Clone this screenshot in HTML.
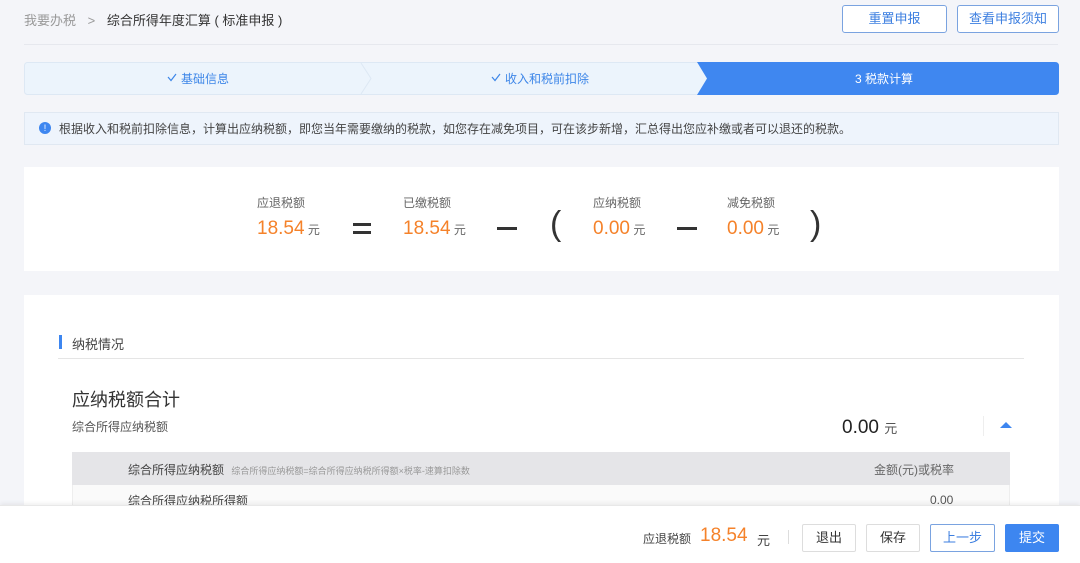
<!DOCTYPE html>
<html><head><meta charset="utf-8"><style>
*{margin:0;padding:0;box-sizing:border-box}
body{width:1080px;height:563px;overflow:hidden;background:#f4f5f9;font-family:"Liberation Sans","Noto Sans CJK SC",sans-serif;position:relative;color:#333}
.a{position:absolute;white-space:nowrap}
.btn{position:absolute;border:1px solid #7aa3e0;border-radius:3px;background:#fff;color:#3d7fe0;font-size:13px;text-align:center;line-height:26px}
.org{color:#f5822a}
.k{font-size:12px;color:#666}
.fb{position:absolute;border:1px solid #ddd;border-radius:2px;background:#fff;font-size:13px;text-align:center;line-height:26px;color:#333}
</style></head><body>
<div class="a" style="left:24px;top:10px;font-size:13px;color:#999">我要办税 <span style="margin:0 8px">&gt;</span> <span style="color:#333">综合所得年度汇算 ( 标准申报 )</span></div>
<div class="btn" style="left:842px;top:5px;width:105px;height:28px">重置申报</div>
<div class="btn" style="left:957px;top:5px;width:102px;height:28px">查看申报须知</div>
<div class="a" style="left:24px;top:44px;width:1034px;height:1px;background:#e6e8ee"></div>
<svg class="a" style="left:24px;top:62px" width="1035" height="33">
<rect x="0.5" y="0.5" width="1034" height="32" rx="3" fill="#ecf4fc" stroke="#dde8f4"/>
<path d="M337 1 L347 16.5 L337 32" fill="none" stroke="#dde8f4"/>
<path d="M673 0 L1031 0 Q1035 0 1035 4 L1035 29 Q1035 33 1031 33 L673 33 L683 16.5 Z" fill="#3f87f0"/>
<path d="M144 15 L147 18.5 L152 12" fill="none" stroke="#3d86e8" stroke-width="1.2"/>
<text x="157" y="21" font-size="12" fill="#3d86e8" font-family="Liberation Sans,Noto Sans CJK SC,sans-serif">基础信息</text>
<path d="M468 15 L471 18.5 L476 12" fill="none" stroke="#3d86e8" stroke-width="1.2"/>
<text x="481" y="21" font-size="12" fill="#3d86e8" font-family="Liberation Sans,Noto Sans CJK SC,sans-serif">收入和税前扣除</text>
<text x="860" y="21" font-size="12" fill="#fff" text-anchor="middle" font-family="Liberation Sans,Noto Sans CJK SC,sans-serif">3 税款计算</text>
</svg>
<div class="a" style="left:24px;top:112px;width:1035px;height:33px;background:#eef4fc;border:1px solid #e0e8f2"></div>
<div class="a" style="left:39px;top:122px;width:12px;height:12px;border-radius:50%;background:#3d86f0;color:#fff;font-size:9px;text-align:center;line-height:12px">!</div>
<div class="a" style="left:59px;top:120px;font-size:12px;color:#444">根据收入和税前扣除信息，计算出应纳税额，即您当年需要缴纳的税款，如您存在减免项目，可在该步新增，汇总得出您应补缴或者可以退还的税款。</div>
<div class="a" style="left:24px;top:167px;width:1035px;height:104px;background:#fff"></div>
<div class="a k" style="left:257px;top:194px">应退税额</div>
<div class="a org" style="left:257px;top:218px;font-size:19px">18.54<span style="font-size:12px;color:#666"> 元</span></div>
<div class="a" style="left:353px;top:223px;width:18px;height:3px;background:#333"></div>
<div class="a" style="left:353px;top:231px;width:18px;height:3px;background:#333"></div>
<div class="a k" style="left:403px;top:194px">已缴税额</div>
<div class="a org" style="left:403px;top:218px;font-size:19px">18.54<span style="font-size:12px;color:#666"> 元</span></div>
<div class="a" style="left:497px;top:227px;width:20px;height:3px;background:#333"></div>
<div class="a" style="left:550px;top:205px;font-size:34px;color:#333">(</div>
<div class="a k" style="left:593px;top:194px">应纳税额</div>
<div class="a org" style="left:593px;top:218px;font-size:19px">0.00<span style="font-size:12px;color:#666"> 元</span></div>
<div class="a" style="left:677px;top:227px;width:20px;height:3px;background:#333"></div>
<div class="a k" style="left:727px;top:194px">减免税额</div>
<div class="a org" style="left:727px;top:218px;font-size:19px">0.00<span style="font-size:12px;color:#666"> 元</span></div>
<div class="a" style="left:810px;top:205px;font-size:34px;color:#333">)</div>
<div class="a" style="left:24px;top:295px;width:1035px;height:220px;background:#fff"></div>
<div class="a" style="left:59px;top:335px;width:3px;height:14px;background:#3d86f0"></div>
<div class="a" style="left:72px;top:334px;font-size:13px;color:#444">纳税情况</div>
<div class="a" style="left:58px;top:358px;width:966px;height:1px;background:#e5e5e5"></div>
<div class="a" style="left:72px;top:386px;font-size:18px;color:#333">应纳税额合计</div>
<div class="a" style="left:72px;top:418px;font-size:12px;color:#555">综合所得应纳税额</div>
<div class="a" style="left:842px;top:417px;font-size:19px;color:#222">0.00 <span style="font-size:13px;color:#555">元</span></div>
<div class="a" style="left:983px;top:416px;width:1px;height:20px;background:#eee"></div>
<div class="a" style="left:1000px;top:422px;width:0;height:0;border-left:6px solid transparent;border-right:6px solid transparent;border-bottom:6px solid #3d86f0"></div>
<div class="a" style="left:72px;top:452px;width:938px;height:33px;background:#e5e5e8"></div>
<div class="a" style="left:128px;top:461px;font-size:12px;color:#444">综合所得应纳税额 <span style="font-size:9px;color:#999;margin-left:4px">综合所得应纳税额=综合所得应纳税所得额×税率-速算扣除数</span></div>
<div class="a" style="left:874px;top:461px;font-size:12px;color:#666">金额(元)或税率</div>
<div class="a" style="left:72px;top:485px;width:938px;height:25px;background:#fafafa;border-left:1px solid #eee;border-right:1px solid #eee"></div>
<div class="a" style="left:128px;top:492px;font-size:12px;color:#444">综合所得应纳税所得额</div>
<div class="a" style="left:930px;top:493px;font-size:12px;color:#555">0.00</div>
<div class="a" style="left:0;top:505px;width:1080px;height:58px;background:#fff;box-shadow:0 -2px 4px rgba(0,0,0,0.06);border-top:1px solid #e8e8e8"></div>
<div class="a" style="left:643px;top:530px;font-size:12px;color:#444">应退税额</div>
<div class="a org" style="left:700px;top:525px;font-size:19px">18.54</div>
<div class="a" style="left:757px;top:530px;font-size:13px;color:#444">元</div>
<div class="a" style="left:788px;top:530px;width:1px;height:14px;background:#ddd"></div>
<div class="fb" style="left:802px;top:524px;width:54px;height:28px">退出</div>
<div class="fb" style="left:866px;top:524px;width:54px;height:28px">保存</div>
<div class="btn" style="left:930px;top:524px;width:65px;height:28px;border-radius:2px">上一步</div>
<div class="a" style="left:1005px;top:524px;width:54px;height:28px;background:#3d86f0;color:#fff;font-size:13px;text-align:center;line-height:28px;border-radius:2px">提交</div>
</body></html>
